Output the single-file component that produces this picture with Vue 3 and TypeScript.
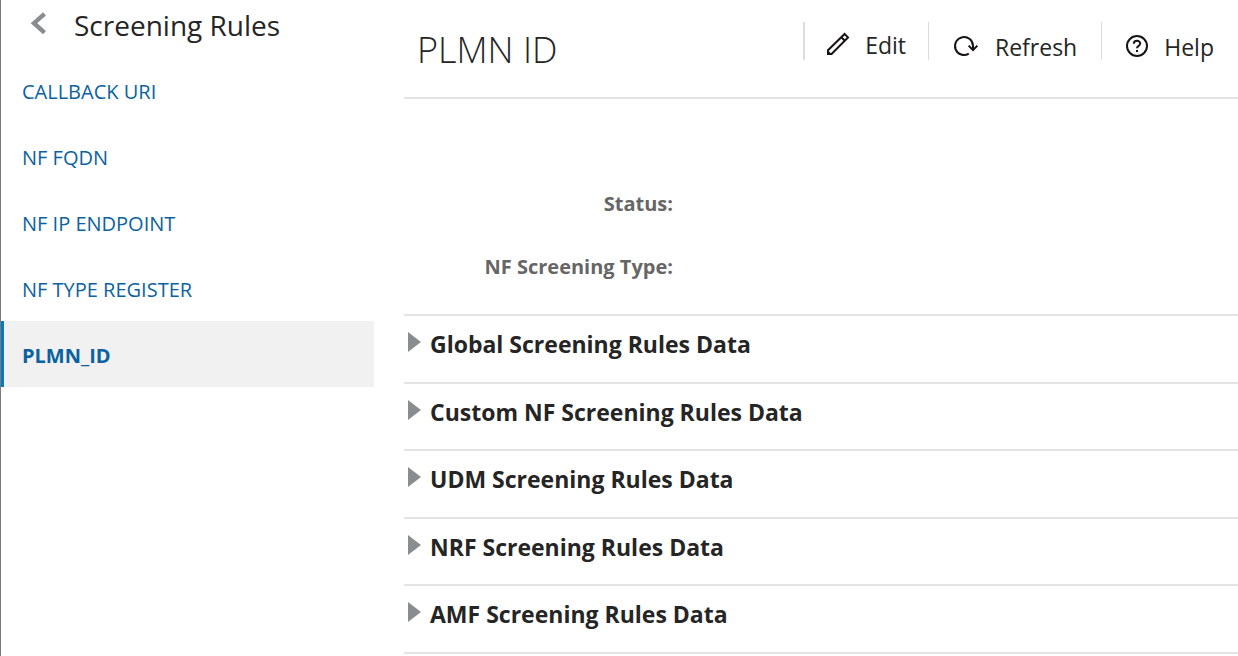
<script setup lang="ts">
import { ref } from 'vue'

interface Rule {
  id: string
  label: string
}

const rules: Rule[] = [
  { id: 'callback-uri', label: 'CALLBACK URI' },
  { id: 'nf-fqdn', label: 'NF FQDN' },
  { id: 'nf-ip-endpoint', label: 'NF IP ENDPOINT' },
  { id: 'nf-type-register', label: 'NF TYPE REGISTER' },
  { id: 'plmn-id', label: 'PLMN_ID' },
]

const sections: string[] = [
  'Global Screening Rules Data',
  'Custom NF Screening Rules Data',
  'UDM Screening Rules Data',
  'NRF Screening Rules Data',
  'AMF Screening Rules Data',
]

const fields: string[] = ['Status:', 'NF Screening Type:']

const selected = ref('plmn-id')
const open = ref<string[]>([])

function toggle(name: string) {
  open.value = open.value.includes(name)
    ? open.value.filter((n) => n !== name)
    : [...open.value, name]
}
</script>

<template>
  <div class="page">
    <aside class="sidebar">
      <header class="side-head">
        <button class="back" type="button" aria-label="Back">
          <svg width="18" height="24" viewBox="0 0 18 24">
            <path d="M14.5 2.8 L4 12.2 L14.5 21.6" fill="none" stroke="#8a8d90" stroke-width="4.4" />
          </svg>
        </button>
        <h2 class="side-title">Screening Rules</h2>
      </header>
      <nav class="nav">
        <a
          v-for="rule in rules"
          :key="rule.id"
          :href="'#' + rule.id"
          class="nav-item"
          :class="{ active: rule.id === selected }"
          @click.prevent="selected = rule.id"
        >{{ rule.label }}</a>
      </nav>
    </aside>

    <main class="content">
      <header class="head">
        <h1 class="title">PLMN ID</h1>
        <div class="toolbar">
          <button class="tool edit" type="button">
            <svg width="24" height="24" viewBox="0 0 24 24" fill="none" stroke="#161513" stroke-width="2">
              <path d="M2 22 V18.2 L18.6 2 L22 5.4 L5.6 22 Z M15.3 5.2 L18.8 8.7" />
              <path d="M2 23 V18.5 L6 22.4 V23 Z" fill="#161513" stroke="none" />
            </svg>
            <span>Edit</span>
          </button>
          <button class="tool" type="button">
            <svg width="28" height="24" viewBox="0 0 28 24" fill="none" stroke="#161513" stroke-width="2">
              <path d="M16.8 19.6 A9 9 0 1 1 21 12 V16" />
              <path d="M16.6 11.6 L21 16 L25.4 11.6" />
            </svg>
            <span>Refresh</span>
          </button>
          <button class="tool" type="button">
            <svg width="24" height="24" viewBox="0 0 24 24" fill="none" stroke="#161513" stroke-width="2">
              <circle cx="12" cy="12" r="10" />
              <path d="M8.8 9.8 C8.8 5.8 15.2 5.8 15.2 9.6 C15.2 12 12 11.6 12 14.2" />
              <path d="M12 16 V18" />
            </svg>
            <span>Help</span>
          </button>
        </div>
      </header>

      <dl class="fields">
        <div v-for="field in fields" :key="field" class="field">
          <dt>{{ field }}</dt>
          <dd></dd>
        </div>
      </dl>

      <div class="sections">
        <h3 v-for="name in sections" :key="name" class="section">
          <button
            class="section-toggle"
            type="button"
            :aria-expanded="open.includes(name)"
            @click="toggle(name)"
          >
            <svg class="arrow" :class="{ down: open.includes(name) }" width="13" height="20" viewBox="0 0 13 20">
              <path d="M0 0 L13 10 L0 20 Z" fill="#8a8d90" />
            </svg>
            <span>{{ name }}</span>
          </button>
        </h3>
      </div>
    </main>
  </div>
</template>

<style>
body {
  margin: 0;
  background: #fff;
}
</style>

<style scoped>
.page {
  box-sizing: border-box;
  display: flex;
  gap: 30px;
  min-height: 100vh;
  border-left: 1px solid #7a7a7a;
  color: #252525;
  font-family: "Open Sans", "Noto Sans", sans-serif;
  overflow: hidden;
}

button {
  padding: 0;
  border: 0;
  background: none;
  color: inherit;
  font: inherit;
  cursor: pointer;
}

svg {
  display: block;
  flex: none;
}

.sidebar {
  flex: 0 0 373px;
}

.side-head {
  display: flex;
  align-items: flex-start;
  gap: 26px;
  height: 57px;
  padding-left: 29px;
}

.back {
  padding-top: 11px;
}

.side-title {
  margin: 0;
  padding-top: 5px;
  font-size: 28px;
  font-weight: 400;
  line-height: 40px;
}

.nav {
  display: flex;
  flex-direction: column;
}

.nav-item {
  padding: 4px 0 0 18px;
  border-left: 3px solid transparent;
  color: #0b62a0;
  font-size: 20px;
  line-height: 62px;
  text-decoration: none;
}

.nav-item.active {
  border-left-color: #0a7abf;
  background: #f1f1f1;
  font-weight: 700;
}

.content {
  flex: 1;
  min-width: 0;
}

.head {
  display: flex;
  justify-content: space-between;
  height: 97px;
  padding: 0 24px 0 13px;
  border-bottom: 2px solid #e4e4e4;
}

.title {
  margin: 0;
  padding-top: 26px;
  font-size: 36px;
  font-weight: 300;
  line-height: 48px;
}

.toolbar {
  display: flex;
  align-items: flex-start;
  padding-top: 22px;
}

.tool {
  display: flex;
  align-items: center;
  gap: 15px;
  height: 38px;
  padding: 10px 24px 0 23px;
  border-left: 1px solid #dcdcdc;
  box-sizing: border-box;
  font-size: 23px;
  line-height: 32px;
}

.tool span {
  padding-top: 2px;
}

.tool.edit {
  padding: 5px 22px 0 21px;
  border-left-width: 2px;
}

.tool:last-child {
  padding-right: 0;
}

.fields {
  margin: 0;
  padding: 73px 0 16px;
}

.field {
  display: flex;
  height: 63px;
}

dt {
  flex: 0 0 269px;
  color: #666;
  font-size: 20px;
  font-weight: 700;
  line-height: 63px;
  text-align: right;
}

dd {
  margin: 0;
}

.sections {
  display: grid;
  grid-auto-rows: 68px 67px;
  border-top: 2px solid #e4e4e4;
}

.section {
  box-sizing: border-box;
  margin: 0;
  padding: 12px 0 0 4px;
  border-bottom: 2px solid #e4e4e4;
  font-size: 23px;
  font-weight: 700;
  line-height: 32px;
}

.section-toggle {
  display: flex;
  align-items: flex-start;
  gap: 9px;
  width: 100%;
  text-align: left;
}

.arrow {
  margin-top: 4px;
}

.arrow.down {
  transform: rotate(90deg);
}
</style>
